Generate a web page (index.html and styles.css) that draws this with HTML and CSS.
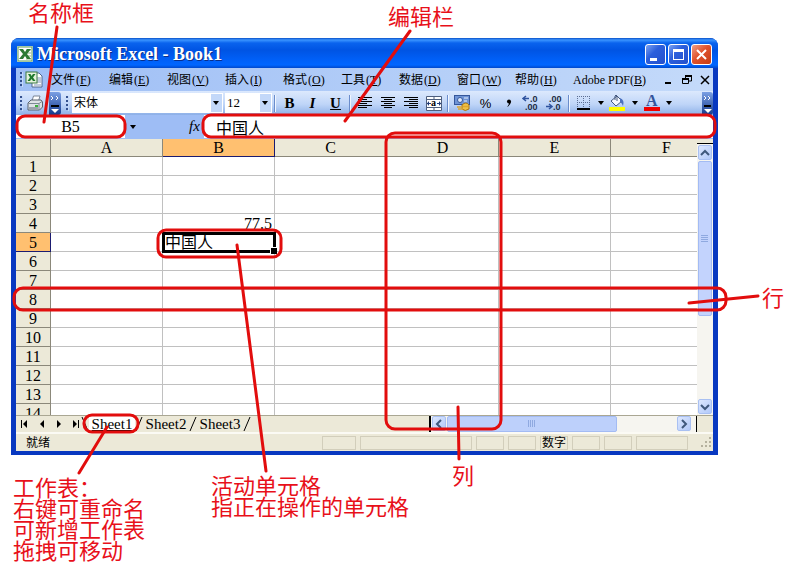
FILE: index.html
```
<!DOCTYPE html>
<html lang="zh-CN">
<head>
<meta charset="utf-8">
<title>Microsoft Excel - Book1</title>
<link rel="stylesheet" href="styles.css">
</head>
<body>
<main class="stage">
  <section class="window">
    <header class="titlebar">
      <svg class="app-icon" width="16" height="16" viewBox="0 0 16 16"><rect width="16" height="16" rx="1" fill="#e9f5e4"/><rect x="1" y="1" width="14" height="14" fill="#fff" stroke="#5d9a5a"/><path d="M9 4h5M9 7h5M9 10h5M9 13h5" stroke="#8dbb87"/><path d="M2 3h4l2 3 2-3h4l-4 5 4 5h-4l-2-3-2 3H2l4-5z" fill="#2c7a35"/></svg>
      <h1>Microsoft Excel - Book1</h1>
      <div class="title-buttons">
        <button class="tb" aria-label="最小化"><svg width="19" height="19"><path d="M4 13h7v3H4z" fill="#fff"/></svg></button>
        <button class="tb" aria-label="最大化"><svg width="19" height="19"><path d="M4 4h11v11H4z M5 7v7h9V7z" fill="#fff" fill-rule="evenodd"/></svg></button>
        <button class="tb close" aria-label="关闭"><svg width="19" height="19"><path d="M5 5l9 9M14 5l-9 9" stroke="#fff" stroke-width="2"/></svg></button>
      </div>
    </header>
    <div class="frame">
      <nav class="menubar">
        <i class="grip"></i>
        <svg class="book-icon" width="18" height="17" viewBox="0 0 18 17"><path d="M7 2h7l3 3v11H7z" fill="#fff" stroke="#51688f"/><path d="M12 7h4M12 9h4M12 11h4M9 14h7" stroke="#8195b8"/><rect x="1" y="1" width="11" height="11" fill="#e4f2dc" stroke="#3a7a42"/><path d="M3 3h2.500l1 2 1.500-2h2.500L8 6.500 10.500 10H8L6.500 8 5 10H2.500L5 6.500z" fill="#217a2e"/></svg>
        <div class="menus">
          <button>文件<span>(<u>F</u>)</span></button>
          <button>编辑<span>(<u>E</u>)</span></button>
          <button>视图<span>(<u>V</u>)</span></button>
          <button>插入<span>(<u>I</u>)</span></button>
          <button>格式<span>(<u>O</u>)</span></button>
          <button>工具<span>(<u>T</u>)</span></button>
          <button>数据<span>(<u>D</u>)</span></button>
          <button>窗口<span>(<u>W</u>)</span></button>
          <button>帮助<span>(<u>H</u>)</span></button>
          <button>Adobe PDF(<u>B</u>)</button>
        </div>
        <div class="doc-buttons">
          <button aria-label="最小化工作簿"><svg width="10" height="10"><path d="M1 7h6v2H1z"/></svg></button>
          <button aria-label="还原工作簿"><svg width="10" height="10"><path d="M3.500 3V.5h6V6H7" fill="none" stroke="#000"/><path d="M3 1h7M0 4h7" stroke="#000" stroke-width="2"/><path d="M.5 3.500h6v5h-6z" fill="none" stroke="#000"/></svg></button>
          <button aria-label="关闭工作簿"><svg width="10" height="10"><path d="M1 1l8 8M9 1l-8 8" stroke="#000" stroke-width="1.500"/></svg></button>
        </div>
      </nav>

      <div class="toolbar">
        <i class="grip"></i>
        <button class="tool" aria-label="打印"><svg width="16" height="16" viewBox="0 0 16 16"><path d="M5 6l1.500-5H13l-1.500 5z" fill="#fff" stroke="#7b8595"/><path d="M1 8l3-3h10l1.500 2v5l-3 3H1z" fill="#dfe3e6" stroke="#59636e"/><path d="M1.500 8.500h10.500V15M12 8.500l3-2" fill="none" stroke="#7e8a94"/><path d="M2 12h9v3H2z" fill="#9ba4ab"/><path d="M8 10h3v2H8z" fill="#39b33c"/></svg></button>
        <button class="more" aria-label="更多按钮"><svg width="12" height="22"><path d="M2 4l2 2-2 2M7 4l2 2-2 2" fill="none" stroke="#fff"/><path d="M2 14h8" stroke="#000" stroke-width="2"/><path d="M2 17h8l-4 4z" fill="#fff"/></svg></button>
        <i class="grip"></i>
        <label class="combo font"><select aria-label="字体"><option>宋体</option></select></label>
        <label class="combo size"><select aria-label="字号"><option>12</option></select></label>
        <i class="sep"></i>
        <button class="tool letter"><b>B</b></button>
        <button class="tool letter"><b><em>I</em></b></button>
        <button class="tool letter"><b><u>U</u></b></button>
        <i class="sep"></i>
        <button class="tool" aria-label="左对齐"><svg width="14" height="12"><path d="M0 .5h14M0 2.500h9M0 4.500h14M0 6.500h9M0 8.500h14M0 10.500h9" stroke="#000"/></svg></button>
        <button class="tool" aria-label="居中"><svg width="14" height="12"><path d="M0 .5h14M3 2.500h8M0 4.500h14M3 6.500h8M0 8.500h14M3 10.500h8" stroke="#000"/></svg></button>
        <button class="tool" aria-label="右对齐"><svg width="14" height="12"><path d="M0 .5h14M5 2.500h9M0 4.500h14M5 6.500h9M0 8.500h14M5 10.500h9" stroke="#000"/></svg></button>
        <button class="tool" aria-label="合并及居中"><svg width="16" height="15"><path d="M.5.5h15v14H.5zM.5 3.500h15M.5 11.500h15M8 0v4M8 11v4" fill="#fff" stroke="#4e5f7e"/><path d="M1 7.500h4M15 7.500h-4" stroke="#223c78"/><path d="M3 5v5L1 7.500zM13 5v5l2-2.500z" fill="#223c78"/><text class="glyph" x="5" y="10">a</text></svg></button>
        <i class="sep"></i>
        <button class="tool" aria-label="货币样式"><svg width="17" height="16"><rect x=".5" y=".5" width="15" height="9" fill="#6f94d6" stroke="#35579b"/><circle cx="6" cy="5" r="2.500" fill="#dce8fb" stroke="#35579b"/><path d="M10 3h4M10 6h3" stroke="#e5eefc"/><path d="M8 10q4-4 7 0v4q-4 3-7 0z" fill="#f0c247" stroke="#a87512"/><path d="M3 12h5M4 14h5M9 11.500h5" stroke="#e0a62e" stroke-width="1.500"/></svg></button>
        <button class="tool percent">%</button>
        <button class="tool" aria-label="千位分隔样式"><svg width="6" height="9"><circle cx="3" cy="2.500" r="2"/><path d="M5 2q0 4-4 6 2-2 2-4z"/></svg></button>
        <button class="tool" aria-label="增加小数位数"><svg width="17" height="16"><path d="M0 3.500h6M3 1L0 3.500 3 6" fill="none" stroke="#2e529e" stroke-width="1.500"/><text class="digits" x="7" y="7">.0</text><text class="digits" x="2" y="15">.00</text></svg></button>
        <button class="tool" aria-label="减少小数位数"><svg width="17" height="16"><text class="digits" x="3" y="7">.00</text><path d="M0 11.500h6M3 9l3 2.500L3 14" fill="none" stroke="#2e529e" stroke-width="1.500"/><text class="digits" x="7" y="15">.0</text></svg></button>
        <i class="sep"></i>
        <button class="tool" aria-label="边框"><svg width="14" height="14"><path d="M.5 0v12M6.500 0v12M12.500 0v12M0 .5h13M0 6.500h13" stroke="#5c6f94" stroke-dasharray="1 1"/><path d="M0 13h13" stroke="#000" stroke-width="2"/></svg></button>
        <button class="drop" aria-label="边框选项"></button>
        <button class="tool" aria-label="填充颜色"><svg width="17" height="16"><path d="M2 6l6-5 5 5-6 5z" fill="#f5f8fd" stroke="#44597f"/><path d="M6 5V1q1-2 2 0v5" fill="none" stroke="#44597f"/><path d="M11 3q5 2 3 8-1-3-3-4z" fill="#4c72c0"/><path d="M0 12h16v4H0z" fill="#ff0"/></svg></button>
        <button class="drop" aria-label="填充颜色选项"></button>
        <button class="tool" aria-label="字体颜色"><svg width="16" height="16"><text class="fontcolor" x="2" y="11">A</text><path d="M0 12h16v4H0z" fill="#f00000"/></svg></button>
        <button class="drop" aria-label="字体颜色选项"></button>
        <button class="more last" aria-label="工具栏选项"><svg width="12" height="22"><path d="M2 4l2 2-2 2M6 4l2 2-2 2" fill="none" stroke="#fff"/><path d="M2 14h7" stroke="#000" stroke-width="2"/><path d="M2 17h8l-4 4z" fill="#fff"/></svg></button>
      </div>

      <div class="formula">
        <input class="name-box" aria-label="名称框" value="B5">
        <button class="drop" aria-label="名称列表"></button>
        <button class="fx" aria-label="插入函数">fx</button>
        <input class="edit-box" aria-label="编辑栏" value="中国人">
      </div>

      <div class="sheet-area">
        <div class="grid">
          <table>
            <colgroup><col class="rowcol"><col><col><col><col><col><col></colgroup>
            <thead><tr><th></th><th>A</th><th class="on">B</th><th>C</th><th>D</th><th>E</th><th>F</th></tr></thead>
            <tbody>
              <tr><th>1</th><td></td><td></td><td></td><td></td><td></td><td></td></tr>
              <tr><th>2</th><td></td><td></td><td></td><td></td><td></td><td></td></tr>
              <tr><th>3</th><td></td><td></td><td></td><td></td><td></td><td></td></tr>
              <tr><th>4</th><td></td><td class="num">77.5</td><td></td><td></td><td></td><td></td></tr>
              <tr><th class="on">5</th><td></td><td class="active">中国人</td><td></td><td></td><td></td><td></td></tr>
              <tr><th>6</th><td></td><td></td><td></td><td></td><td></td><td></td></tr>
              <tr><th>7</th><td></td><td></td><td></td><td></td><td></td><td></td></tr>
              <tr><th>8</th><td></td><td></td><td></td><td></td><td></td><td></td></tr>
              <tr><th>9</th><td></td><td></td><td></td><td></td><td></td><td></td></tr>
              <tr><th>10</th><td></td><td></td><td></td><td></td><td></td><td></td></tr>
              <tr><th>11</th><td></td><td></td><td></td><td></td><td></td><td></td></tr>
              <tr><th>12</th><td></td><td></td><td></td><td></td><td></td><td></td></tr>
              <tr><th>13</th><td></td><td></td><td></td><td></td><td></td><td></td></tr>
              <tr><th>14</th><td></td><td></td><td></td><td></td><td></td><td></td></tr>
            </tbody>
          </table>
        </div>
        <div class="vscroll">
          <button class="sb" aria-label="向上滚动"><svg width="10" height="8"><path d="M1 6l4-4 4 4" /></svg></button>
          <div class="vthumb"><svg width="8" height="8"><path d="M0 .5h7M0 2.500h7M0 4.500h7M0 6.500h7"/></svg></div>
          <button class="sb bottom" aria-label="向下滚动"><svg width="10" height="8"><path d="M1 2l4 4 4-4"/></svg></button>
        </div>
      </div>

      <div class="tabs">
        <div class="tab-nav">
          <button aria-label="第一张"><svg width="8" height="8"><path d="M0 0h1v8H0zM6 0v8L2 4z"/></svg></button>
          <button aria-label="上一张"><svg width="8" height="8"><path d="M6 0v8L2 4z"/></svg></button>
          <button aria-label="下一张"><svg width="8" height="8"><path d="M2 0v8l4-4z"/></svg></button>
          <button aria-label="最后一张"><svg width="8" height="8"><path d="M1 0v8l4-4zM6 0h1v8H6z"/></svg></button>
        </div>
        <svg class="slash" width="8" height="16"><path d="M1 1l6 14" /></svg>
        <button class="tab current">Sheet1</button>
        <svg class="slash" width="8" height="16"><path d="M7 1L1 15"/></svg>
        <button class="tab">Sheet2</button>
        <svg class="slash" width="8" height="16"><path d="M7 1L1 15"/></svg>
        <button class="tab">Sheet3</button>
        <svg class="slash" width="8" height="16"><path d="M7 1L1 15"/></svg>
        <div class="hscroll">
          <button class="sb" aria-label="向左滚动"><svg width="8" height="10"><path d="M6 1L2 5l4 4"/></svg></button>
          <div class="hthumb"><svg width="8" height="8"><path d="M.5 0v7M2.500 0v7M4.500 0v7M6.500 0v7"/></svg></div>
          <button class="sb end" aria-label="向右滚动"><svg width="8" height="10"><path d="M2 1l4 4-4 4"/></svg></button>
        </div>
      </div>

      <footer class="status">
        <span class="ready">就绪</span>
        <i class="pane w34"></i><i class="pane w112"></i><i class="pane"></i><i class="pane"></i>
        <span class="pane mode">数字</span>
        <i class="pane"></i><i class="pane"></i><i class="pane w52"></i>
        <svg class="resize" width="13" height="13"><path d="M9 1h2v2H9zM5 5h2v2H5zM9 5h2v2H9zM1 9h2v2H1zM5 9h2v2H5zM9 9h2v2H9z" fill="#b5b19e"/></svg>
      </footer>
    </div>
  </section>

  <svg class="marks" width="794" height="568" viewBox="0 0 794 568">
    <rect x="17" y="116" width="108" height="21" rx="8"/>
    <rect x="203" y="115" width="512" height="22" rx="8"/>
    <rect x="386" y="133" width="115" height="296" rx="9"/>
    <rect x="14" y="288" width="712" height="22" rx="9"/>
    <rect x="158" y="230" width="123" height="27" rx="8"/>
    <rect x="84" y="415" width="54" height="17" rx="8"/>
    <path d="M57 27L44 122M410 31L345 121M237 245l11 85 18 141M107 427L79 473M458 407l1 52M689 303l69-7"/>
  </svg>
  <p class="note n-name">名称框</p>
  <p class="note n-edit">编辑栏</p>
  <p class="note n-row">行</p>
  <p class="note n-col">列</p>
  <p class="note n-cell">活动单元格<br>指正在操作的单元格</p>
  <p class="note n-sheet">工作表：<br>右键可重命名<br>可新增工作表<br>拖拽可移动</p>
</main>
</body>
</html>
```
FILE: styles.css
```
* { box-sizing: border-box; }
body { margin: 0; background: #fff; color: #000; font: 12px "Liberation Serif", "Noto Sans CJK SC", serif; }
button, input, select { font: inherit; color: inherit; margin: 0; padding: 0; border: 0; background: none; border-radius: 0; }
button { display: flex; align-items: center; justify-content: center; }
svg { display: block; flex: none; overflow: visible; }

.stage { position: relative; min-height: 568px; padding: 38px 76px 0 11px; }
.window { border-radius: 8px 8px 0 0; background: #0a3fc8; overflow: hidden; }

.titlebar { display: flex; align-items: center; height: 30px; padding: 2px 6px 0; background: linear-gradient(#0a50c8 0, #3a94ff 2px, #0a63ee 5px, #0054e3 12px, #0060f8 22px, #0066ff 27px, #0048cc 30px); }
.titlebar h1 { flex: 1; margin: 0 0 0 4px; font-size: 18px; line-height: 20px; color: #fff; text-shadow: 1px 1px 0 #0a2f8a; white-space: nowrap; }
.title-buttons { display: flex; gap: 2px; }
.tb { width: 21px; height: 21px; border: 1px solid #fff; border-radius: 3px; background: linear-gradient(135deg, #7ba2f2, #2c5fdc 40%, #2450cc); }
.tb.close { background: linear-gradient(135deg, #f0a088, #e0522c 45%, #c53c14); }

.frame { border: solid #0838c0; border-width: 0 5px 4px; background: #ece9d8; }

.menubar { display: flex; align-items: center; height: 23px; background: linear-gradient(90deg, #9ebef5, #c4dafa); padding: 0 3px 0 4px; }
.grip { flex: none; width: 3px; height: 15px; background: repeating-linear-gradient(#34518f 0 2px, transparent 2px 4px); border-right: 1px solid #c4d8f8; }
.book-icon { margin-left: 2px; }
.menus { display: flex; flex: 1; gap: 16px; margin-left: 8px; }
.menus button { flex: none; width: 42px; justify-content: flex-start; white-space: nowrap; line-height: 16px; }
.menus span { margin-left: 1px; }
.doc-buttons { display: flex; gap: 8px; }

.toolbar { display: flex; align-items: center; height: 24px; padding: 0 0 0 4px; background: linear-gradient(#dce9fd, #bfd5f8 55%, #8db0e8); }
.tool { flex: none; width: 23px; height: 22px; }
.more { flex: none; width: 12px; height: 23px; margin: 0 5px 0 3px; background: linear-gradient(#7ba0e4, #14398c); border-radius: 0 3px 3px 0; }
.more.last { width: 11px; margin: 0 0 0 auto; }
.combo { position: relative; flex: none; height: 20px; background: #fff; }
.combo::after { content: ""; position: absolute; right: 1px; top: 1px; width: 11px; height: 18px; pointer-events: none; background: #c3d8f9; }
.combo::before { content: ""; position: absolute; z-index: 1; right: 4px; top: 8px; border: solid transparent; border-width: 4px 3px 0; border-top-color: #000; pointer-events: none; }
.combo select { appearance: none; width: 100%; height: 20px; padding-left: 2px; line-height: 18px; }
.combo.font { width: 151px; margin: 0 2px 0 3px; }
.combo.size { width: 47px; font-size: 13px; }
.sep { flex: none; width: 2px; height: 17px; margin: 0 2px; background: linear-gradient(90deg, #6a8ccb 50%, #f0f6ff 50%); }
.letter { font-size: 15px; }
.percent { font: 13px "Liberation Sans", sans-serif; }
.glyph { font: bold 10px "Liberation Serif", serif; }
.digits { font: bold 9px "Liberation Sans", sans-serif; fill: #222c44; }
.fontcolor { font: bold 16px "Liberation Serif", serif; fill: #35559b; }
.drop { flex: none; width: 11px; height: 20px; }
.drop::after { content: ""; border: solid transparent; border-width: 4px 3px 0; border-top-color: #000; }

.formula { display: flex; height: 24px; padding-bottom: 1px; background: #9ebdf5; font-size: 16px; }
.name-box { flex: none; width: 109px; background: #fff; text-align: center; }
.formula .drop { margin: 2px 0 0 2px; }
.fx { width: 19px; margin-left: 47px; font: italic 15px "Liberation Serif", serif; }
.edit-box { flex: 1; min-width: 0; padding-left: 12px; background: #fff; }

.sheet-area { display: flex; height: 276px; }
.grid { flex: 1; min-width: 0; overflow: hidden; background: #fff; }
table { width: 707px; table-layout: fixed; border-collapse: separate; border-spacing: 0; font-size: 16px; line-height: 16px; }
.rowcol { width: 35px; }
th, td { height: 19px; padding: 0; border: solid #c0c0c0; border-width: 0 1px 1px 0; white-space: nowrap; }
thead th { height: 18px; }
th { font-weight: normal; background: #ece9d8; border-color: #8b887a; }
th.on { background: #ffc070; border-color: #1b1b70; }
tbody th { padding-top: 2px; }
.num { text-align: right; padding: 2px 2px 0 0; }
.active { position: relative; padding: 2px 0 0 2px; outline: 3px solid #000; outline-offset: -2px; }
.active::after { content: ""; position: absolute; right: -3px; bottom: -3px; width: 6px; height: 6px; background: #000; border: solid #fff; border-width: 1px 0 0 1px; }

.vscroll { display: flex; flex-direction: column; flex: none; width: 16px; margin-top: 4px; padding: 1px; border-top: 1px solid #000; background: #f6f5f0; }
.sb { flex: none; width: 14px; height: 15px; border: 1px solid #a9c0f2; border-radius: 2px; background: linear-gradient(135deg, #dce7fe, #b2c9f9); }
.sb path { fill: none; stroke: #3f587c; stroke-width: 2; }
.vthumb, .hthumb { display: flex; align-items: center; justify-content: center; border: 1px solid #a3bbf3; border-radius: 2px; background: #c3d3fd; }
.vthumb { height: 155px; margin-top: 1px; }
.vthumb path, .hthumb path { stroke: #8fa9e0; }
.sb.bottom { margin-top: auto; }

.tabs { display: flex; height: 17px; border-top: 1px solid #aaa793; }
.tab-nav { display: flex; width: 65px; flex: none; }
.tab-nav button { width: 17px; flex: none; }
.slash path { fill: none; stroke: #000; }
.tab { width: 46px; flex: none; font-size: 15px; line-height: 15px; }
.tab.current { background: #fff; text-decoration: underline; }
.hscroll { display: flex; flex: none; width: 268px; margin-left: auto; margin-right: 16px; padding: 0 5px 0 1px; border-left: 2px solid #000; border-right: 1px solid #000; background: #f6f5f0; }
.hthumb { width: 170px; margin-left: 1px; background: #bdd0fb; }
.sb.end { margin-left: auto; }

.status { display: flex; align-items: center; gap: 4px; height: 19px; border-top: 2px solid #fbfaf4; background: #ece9d8; }
.ready { flex: 1; padding-left: 10px; line-height: 16px; }
.pane { flex: none; width: 28px; height: 14px; border: 1px solid #d2cebb; }
.w34 { width: 34px; } .w112 { width: 112px; } .w52 { width: 52px; }
.mode { line-height: 12px; text-align: center; }
.resize { margin-left: 8px; }

.marks { position: absolute; left: 0; top: 0; pointer-events: none; }
.marks rect, .marks path { fill: none; stroke: #e20d0d; stroke-width: 3; stroke-linecap: round; }
.note { position: absolute; margin: 0; font-size: 22px; line-height: 21px; color: #e8101a; white-space: nowrap; }
.n-name { left: 28px; top: 3px; }
.n-edit { left: 388px; top: 7px; }
.n-row { left: 762px; top: 288px; }
.n-col { left: 452px; top: 466px; }
.n-cell { left: 211px; top: 476px; }
.n-sheet { left: 13px; top: 478px; }
```
